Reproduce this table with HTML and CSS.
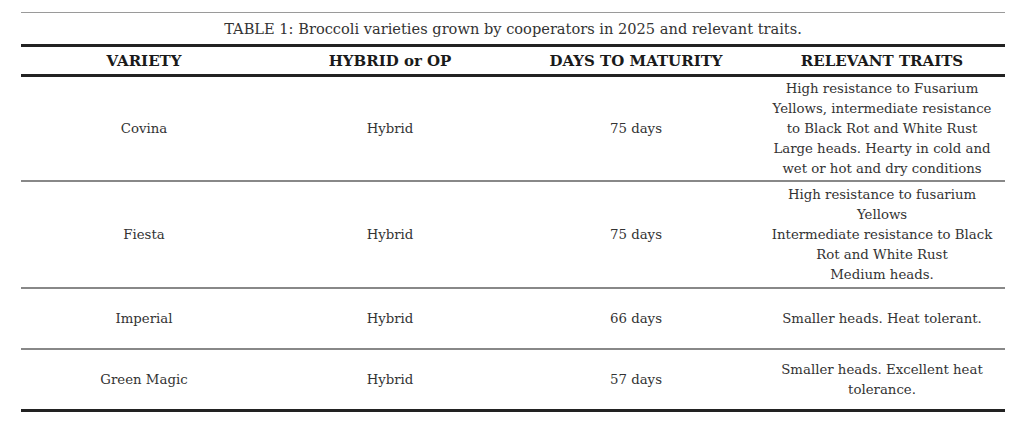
FILE: index.html
```html
<!DOCTYPE html>
<html lang="en">
<head>
<meta charset="utf-8">
<title>Broccoli varieties</title>
<link rel="stylesheet" href="styles.css">
</head>
<body>
<div class="table">
  <div class="caption">TABLE 1: Broccoli varieties grown by cooperators in 2025 and relevant traits.</div>
  <div class="row head">
    <div>VARIETY</div>
    <div>HYBRID or OP</div>
    <div>DAYS TO MATURITY</div>
    <div>RELEVANT TRAITS</div>
  </div>
  <div class="row r1">
    <div>Covina</div>
    <div>Hybrid</div>
    <div>75 days</div>
    <div class="traits">High resistance to Fusarium<br>Yellows, intermediate resistance<br>to Black Rot and White Rust<br>Large heads. Hearty in cold and<br>wet or hot and dry conditions</div>
  </div>
  <div class="row r2">
    <div>Fiesta</div>
    <div>Hybrid</div>
    <div>75 days</div>
    <div class="traits">High resistance to fusarium<br>Yellows<br>Intermediate resistance to Black<br>Rot and White Rust<br>Medium heads.</div>
  </div>
  <div class="row r3">
    <div>Imperial</div>
    <div>Hybrid</div>
    <div>66 days</div>
    <div class="traits">Smaller heads. Heat tolerant.</div>
  </div>
  <div class="row r4 last">
    <div>Green Magic</div>
    <div>Hybrid</div>
    <div>57 days</div>
    <div class="traits">Smaller heads. Excellent heat<br>tolerance.</div>
  </div>
</div>
</body>
</html>
```
FILE: styles.css
```css
html, body {
  margin: 0;
  padding: 0;
  background: #ffffff;
}
body {
  font-family: "DejaVu Serif", "Liberation Serif", serif;
  font-size: 13.3px;
  color: #333333;
}
.table {
  width: 984px;
  margin: 12px 0 0 21px;
}
.caption {
  box-sizing: border-box;
  height: 35px;
  border-top: 1px solid #9a9a9a;
  border-bottom: 3px solid #222222;
  display: flex;
  align-items: center;
  justify-content: center;
  font-size: 14.6px;
  white-space: nowrap;
}
.row {
  box-sizing: border-box;
  display: grid;
  grid-template-columns: repeat(4, 1fr);
  align-items: center;
  text-align: center;
  border-bottom: 2px solid #888888;
  line-height: 20px;
  white-space: nowrap;
}
.head {
  height: 30px;
  border-bottom: 3px solid #222222;
  font-weight: bold;
  color: #1a1a1a;
  font-size: 15px;
}
.r1 { height: 105px; }
.r2 { height: 107px; }
.r3 { height: 61px; }
.r4 { height: 62px; }
.last { border-bottom: 3px solid #222222; }
```
